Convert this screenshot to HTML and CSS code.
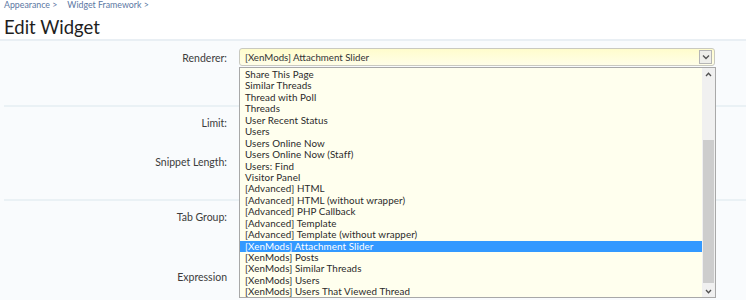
FILE: index.html
```html
<!DOCTYPE html>
<html>
<head>
<meta charset="utf-8">
<link rel="stylesheet" href="styles.css">
</head>
<body>
<div class="page">
  <div class="header">
    <div class="crumbs"><span class="crumb">Appearance &gt;</span><span class="crumb">Widget Framework &gt;</span></div>
    <h1 class="title">Edit Widget</h1>
  </div>
  <div class="section s1">
    <div class="row">
      <div class="label">Renderer:</div>
      <div class="control">
        <div class="select">
          <span class="select-text">[XenMods] Attachment Slider</span>
          <span class="select-btn"><svg width="8" height="6" viewBox="0 0 8 6"><path d="M1 1.5 L4 4.5 L7 1.5" fill="none" stroke="#555" stroke-width="1.4"/></svg></span>
        </div>
        <div class="dropdown">
          <div class="options">
            <div class="opt">Share This Page</div>
            <div class="opt">Similar Threads</div>
            <div class="opt">Thread with Poll</div>
            <div class="opt">Threads</div>
            <div class="opt">User Recent Status</div>
            <div class="opt">Users</div>
            <div class="opt">Users Online Now</div>
            <div class="opt">Users Online Now (Staff)</div>
            <div class="opt">Users: Find</div>
            <div class="opt">Visitor Panel</div>
            <div class="opt">[Advanced] HTML</div>
            <div class="opt">[Advanced] HTML (without wrapper)</div>
            <div class="opt">[Advanced] PHP Callback</div>
            <div class="opt">[Advanced] Template</div>
            <div class="opt">[Advanced] Template (without wrapper)</div>
            <div class="opt selected">[XenMods] Attachment Slider</div>
            <div class="opt">[XenMods] Posts</div>
            <div class="opt">[XenMods] Similar Threads</div>
            <div class="opt">[XenMods] Users</div>
            <div class="opt">[XenMods] Users That Viewed Thread</div>
          </div>
          <div class="scrollbar">
            <div class="sb-btn"><svg width="7" height="5" viewBox="0 0 7 5"><path d="M1 4 L3.5 1.3 L6 4" fill="none" stroke="#505050" stroke-width="1.3"/></svg></div>
            <div class="sb-track"><div class="sb-thumb"></div></div>
            <div class="sb-btn"><svg width="7" height="5" viewBox="0 0 7 5"><path d="M1 1 L3.5 3.7 L6 1" fill="none" stroke="#505050" stroke-width="1.3"/></svg></div>
          </div>
        </div>
      </div>
    </div>
  </div>
  <div class="section s2">
    <div class="row r-limit"><div class="label">Limit:</div><div class="control"></div></div>
    <div class="row r-snippet"><div class="label">Snippet Length:</div><div class="control"></div></div>
  </div>
  <div class="section s3">
    <div class="row r-tab"><div class="label">Tab Group:</div><div class="control"></div></div>
    <div class="row r-expr"><div class="label">Expression</div><div class="control"></div></div>
  </div>
</div>
</body>
</html>
```

FILE: styles.css
```css
html, body {
  margin: 0;
  padding: 0;
  background: #f9fbfd;
  overflow: hidden;
}
body {
  width: 746px;
  height: 300px;
  font-family: "Lato", "Open Sans", sans-serif;
  color: #333;
}
.page {
  width: 746px;
  height: 300px;
  overflow: hidden;
}
.header {
  background: #ffffff;
  padding: 0 0 0 4px;
  height: 39px;
  border-bottom: 2px solid #e9eff4;
}
.crumbs {
  display: flex;
  gap: 10px;
  font-size: 8.8px;
  line-height: 10px;
  padding-top: 0;
  color: #5b77a3;
}
.title {
  margin: 6px 0 0 0;
  font-size: 18.5px;
  line-height: 22px;
  font-weight: normal;
  color: #1e1e1e;
}
.section {
  margin-left: 4px;
  border-bottom: 2px solid #eaf1f5;
}
.s1 {
  height: 57px;
  padding-top: 7px;
}
.s2 {
  height: 83px;
  padding-top: 9px;
}
.s3 {
  height: 90px;
  padding-top: 9px;
  border-bottom: none;
}
.row {
  display: grid;
  grid-template-columns: 223px 476px;
  column-gap: 12px;
  align-items: start;
}
.label {
  text-align: right;
  font-size: 10.5px;
  line-height: 14px;
  color: #3c3c3c;
}
.s1 .label {
  padding-top: 3px;
}
.r-limit { height: 39px; }
.r-snippet { height: 14px; }
.r-tab { height: 60px; }
.r-expr { height: 14px; }
.control {
  position: relative;
}
.select {
  height: 16px;
  border: 1px solid #c9c9c0;
  border-radius: 3px;
  background: linear-gradient(#fffccc, #fffee8);
  display: flex;
  align-items: center;
  justify-content: space-between;
  padding: 0 2px 0 5px;
}
.select-text {
  font-size: 9.7px;
  color: #333;
}
.select-btn {
  width: 11px;
  height: 12px;
  border: 1px solid #b5b5b5;
  background: #eeeeea;
  display: flex;
  align-items: center;
  justify-content: center;
}
.dropdown {
  position: absolute;
  left: 0;
  top: 19px;
  width: 475px;
  height: 229px;
  border: 1px solid #a8a8a8;
  background: #ffffee;
  display: flex;
  z-index: 5;
}
.options {
  flex: 1;
  padding-top: 1px;
}
.opt {
  height: 11.45px;
  line-height: 11.45px;
  font-size: 9.8px;
  padding-left: 5px;
  color: #2a2a2a;
  white-space: nowrap;
  letter-spacing: 0.1px;
}
.opt.selected {
  background: #3399ff;
  color: #ffffff;
}
.scrollbar {
  width: 13px;
  display: flex;
  flex-direction: column;
  background: #f0f0f0;
}
.sb-btn {
  height: 12px;
  display: flex;
  align-items: center;
  justify-content: center;
}
.sb-track {
  flex: 1;
  padding-top: 60px;
  padding-bottom: 2px;
  display: flex;
  flex-direction: column;
}
.sb-thumb {
  flex: 1;
  margin: 0 1px;
  background: #cdcdcd;
}
```
